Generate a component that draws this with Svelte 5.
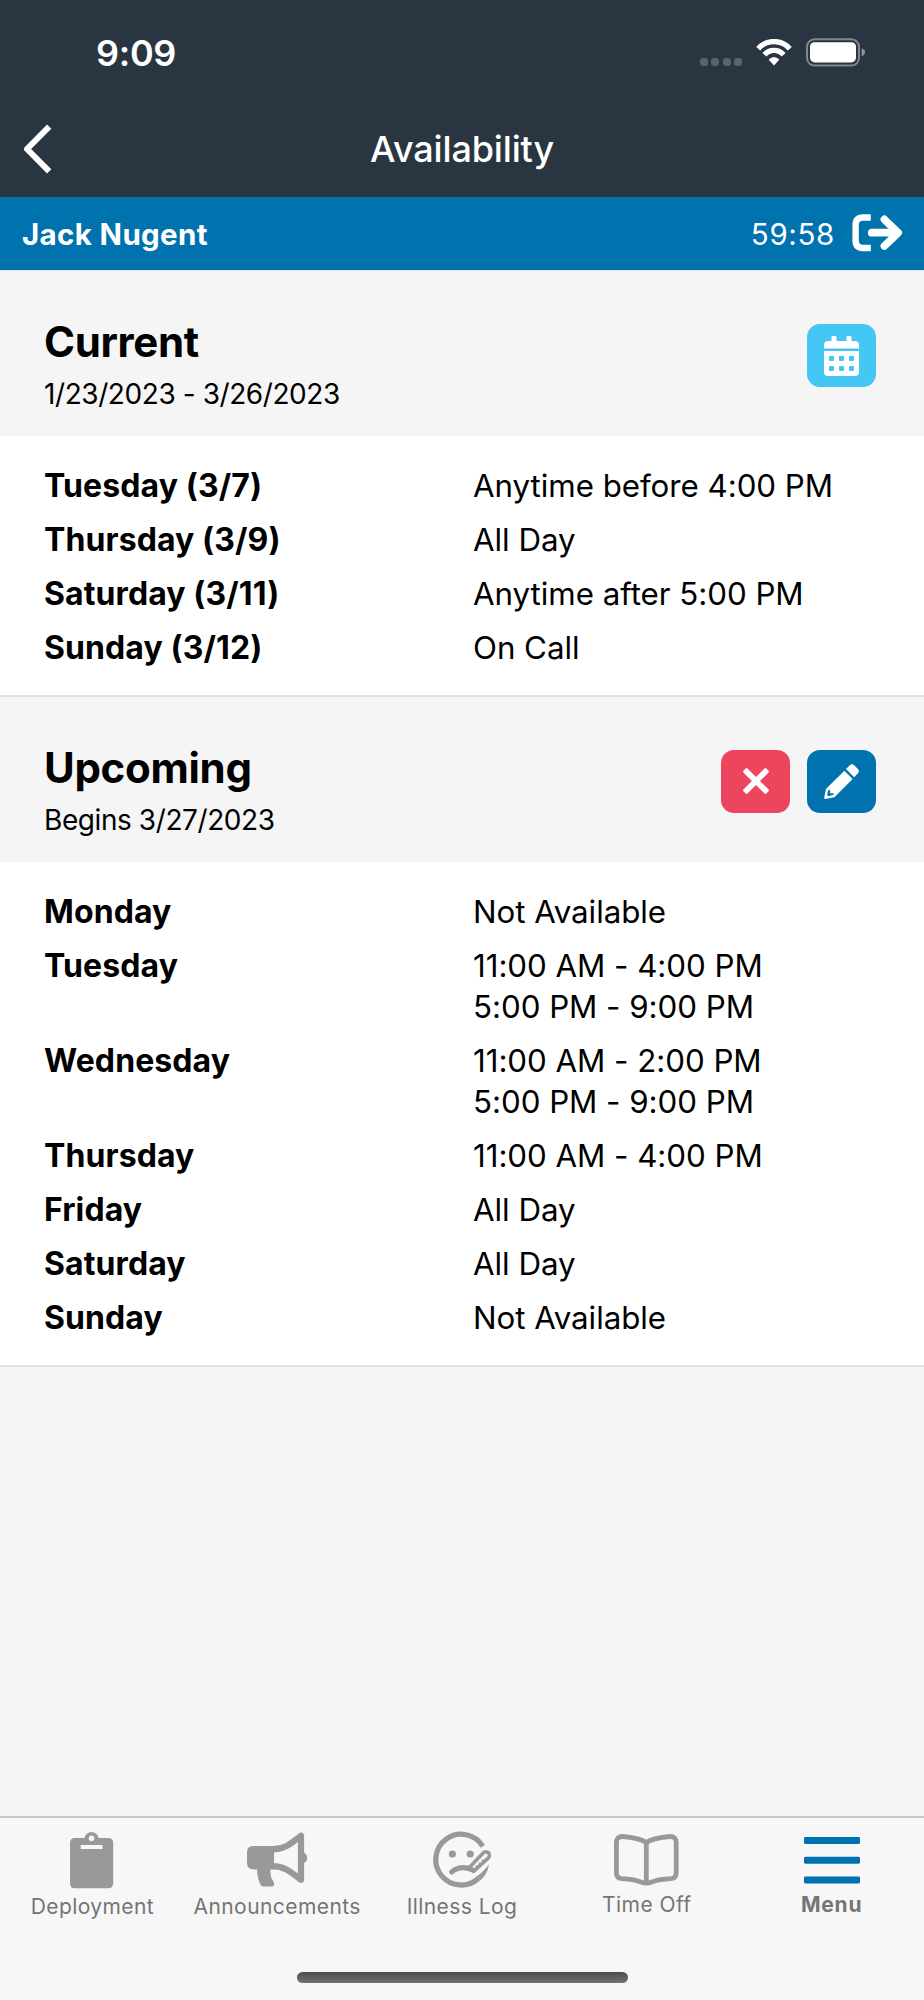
<script lang="ts">
  type Slot = { day: string; times: string[] };

  export let user: string = 'Jack Nugent';
  export let timeLeft: string = '59:58';

  const current: Slot[] = [
    { day: 'Tuesday (3/7)', times: ['Anytime before 4:00 PM'] },
    { day: 'Thursday (3/9)', times: ['All Day'] },
    { day: 'Saturday (3/11)', times: ['Anytime after 5:00 PM'] },
    { day: 'Sunday (3/12)', times: ['On Call'] },
  ];

  const upcoming: Slot[] = [
    { day: 'Monday', times: ['Not Available'] },
    { day: 'Tuesday', times: ['11:00 AM - 4:00 PM', '5:00 PM - 9:00 PM'] },
    { day: 'Wednesday', times: ['11:00 AM - 2:00 PM', '5:00 PM - 9:00 PM'] },
    { day: 'Thursday', times: ['11:00 AM - 4:00 PM'] },
    { day: 'Friday', times: ['All Day'] },
    { day: 'Saturday', times: ['All Day'] },
    { day: 'Sunday', times: ['Not Available'] },
  ];

  const sections = [
    { id: 'current', title: 'Current', range: '1/23/2023 - 3/26/2023', slots: current },
    { id: 'upcoming', title: 'Upcoming', range: 'Begins 3/27/2023', slots: upcoming },
  ];
</script>

<div class="screen">
  <header>
    <div class="status">
      <span class="clock">9:09</span>
      <div class="indicators">
        <div class="dots"><i></i><i></i><i></i><i></i></div>
        <svg class="wifi" width="36" height="27" viewBox="0 0 36 27" fill="none">
          <path d="M2.2 9.7A21 21 0 0 1 33.8 9.7" stroke="#fff" stroke-width="5.3" />
          <path d="M8.4 15.8A12.5 12.5 0 0 1 27.6 15.8" stroke="#fff" stroke-width="5.3" />
          <path d="M18 26.6L12.6 20.6Q18 15.6 23.4 20.6Z" fill="#fff" />
        </svg>
        <svg class="battery" width="59" height="29" viewBox="0 0 59 29">
          <rect x="1" y="1.2" width="52" height="26.4" rx="7.6" fill="none" stroke="#7f878d" stroke-width="2" />
          <rect x="4" y="4.2" width="46" height="20.2" rx="4.6" fill="#fff" />
          <path d="M55.7 10.3Q59 11.6 59 14.2T55.7 18.2Z" fill="#8d9499" />
        </svg>
      </div>
    </div>
    <div class="nav">
      <button class="back" aria-label="Back">
        <svg width="30" height="52" viewBox="0 0 30 52" fill="none">
          <path d="M26.2 3.6L4 26L26.2 48.4" stroke="#fff" stroke-width="6" stroke-linejoin="round" />
        </svg>
      </button>
      <h1>Availability</h1>
      <span></span>
    </div>
  </header>

  <div class="session">
    <strong>{user}</strong>
    <span class="countdown">{timeLeft}</span>
    <svg width="51" height="38" viewBox="0 0 51 38" fill="none" stroke="#fff">
      <path d="M18.8 3.5H11Q3.6 3.5 3.6 10.8V26.6Q3.6 34 11 34H18.8" stroke-width="6.4" />
      <path d="M19.8 18.7H44" stroke-width="7.8" stroke-linecap="round" />
      <path d="M32.4 5.4L46.2 18.7L32.4 32" stroke-width="7.6" stroke-linecap="round" stroke-linejoin="round" />
    </svg>
  </div>

  <main>
    {#each sections as section}
      <section>
        <div class="head">
          <div>
            <h2 class={section.id}>{section.title}</h2>
            <p>{section.range}</p>
          </div>
          <div class="actions">
            {#if section.id === 'current'}
              <button class="info" aria-label="Calendar">
                <svg width="35" height="40" viewBox="0 0 448 512" fill="#fff">
                  <path d="M0 464c0 26.5 21.5 48 48 48h352c26.5 0 48-21.5 48-48V192H0v272zm320-196c0-6.6 5.4-12 12-12h40c6.6 0 12 5.4 12 12v40c0 6.6-5.4 12-12 12h-40c-6.6 0-12-5.4-12-12v-40zm0 128c0-6.6 5.4-12 12-12h40c6.6 0 12 5.4 12 12v40c0 6.6-5.4 12-12 12h-40c-6.6 0-12-5.4-12-12v-40zM192 268c0-6.6 5.4-12 12-12h40c6.6 0 12 5.4 12 12v40c0 6.6-5.4 12-12 12h-40c-6.6 0-12-5.4-12-12v-40zm0 128c0-6.6 5.4-12 12-12h40c6.6 0 12 5.4 12 12v40c0 6.6-5.4 12-12 12h-40c-6.6 0-12-5.4-12-12v-40zM64 268c0-6.6 5.4-12 12-12h40c6.6 0 12 5.4 12 12v40c0 6.6-5.4 12-12 12H76c-6.6 0-12-5.4-12-12v-40zm0 128c0-6.6 5.4-12 12-12h40c6.6 0 12 5.4 12 12v40c0 6.6-5.4 12-12 12H76c-6.6 0-12-5.4-12-12v-40zM400 64h-48V16c0-8.8-7.2-16-16-16h-32c-8.8 0-16 7.2-16 16v48H160V16c0-8.8-7.2-16-16-16h-32c-8.8 0-16 7.2-16 16v48H48C21.5 64 0 85.5 0 112v48h448v-48c0-26.5-21.5-48-48-48z" />
                </svg>
              </button>
            {:else}
              <button class="danger" aria-label="Delete">
                <svg width="26" height="26" viewBox="-13 -13 26 26" fill="#fff">
                  <rect x="-16.2" y="-2.9" width="32.4" height="5.8" rx="1.6" transform="rotate(45)" />
                  <rect x="-16.2" y="-2.9" width="32.4" height="5.8" rx="1.6" transform="rotate(-45)" />
                </svg>
              </button>
              <button class="primary" aria-label="Edit">
                <svg width="35" height="35" viewBox="0 0 35 35" fill="#fff">
                  <path d="M22 5.1L25.6 1.5Q28 -.8 30.4 1.5L33.7 4.8Q36 7.2 33.7 9.6L30.2 13.2Z" />
                  <path
                    fill-rule="evenodd"
                    d="M20.4 6.7L28.6 15L10.4 33.2L1.3 35Q0 35 .2 33.8L1.9 25.1ZM4.2 26.3L3.2 31Q3.6 32.2 5 31.9L9.6 30.8V29.2H6.1V25.7Z"
                  />
                </svg>
              </button>
            {/if}
          </div>
        </div>
        <dl>
          {#each section.slots as slot}
            <div class="row">
              <dt>{slot.day}</dt>
              <dd>
                {#each slot.times as time}
                  <span>{time}</span>
                {/each}
              </dd>
            </div>
          {/each}
        </dl>
      </section>
    {/each}
  </main>

  <nav class="tabs">
    <div class="tab">
      <div class="icon">
        <svg width="44" height="58" viewBox="0 0 44 58" fill="#999">
          <path
            fill-rule="evenodd"
            d="M5 7H14.4A7.2 7.2 0 0 1 28.6 7H38.2Q43.2 7 43.2 12V52.3Q43.2 57.3 38.2 57.3H5Q0 57.3 0 52.3V12Q0 7 5 7ZM10.7 14V18.1H32.5V14ZM18.8 7.2A2.8 2.8 0 0 0 24.4 7.2A2.8 2.8 0 0 0 18.8 7.2Z"
          />
        </svg>
      </div>
      <span>Deployment</span>
    </div>
    <div class="tab">
      <div class="icon">
        <svg width="60" height="56" viewBox="0 0 60 56" fill="#999">
          <path d="M6.5 14H27V37.4H6.5Q0 37.4 0 31V20.4Q0 14 6.5 14Z" />
          <path d="M10 36H23.4V41Q23.6 46 26.6 49.5Q28.4 54.6 24.4 54.6H16.6Q14.4 54.6 13.4 52.6Q10 45.5 10 36Z" />
          <path
            d="M26 17.2C38 17.2 44.5 11 54 3.7V47.7C44.5 40.5 38 34.2 26 34.2"
            fill="none"
            stroke="#999"
            stroke-width="6.2"
            stroke-linejoin="round"
          />
          <path d="M56 20.4A5.6 5.6 0 0 1 56 31.2Z" />
        </svg>
      </div>
      <span>Announcements</span>
    </div>
    <div class="tab">
      <div class="icon">
        <svg width="58" height="58" viewBox="0 0 58 58" fill="#999">
          <path d="M49.8 15.3A25.4 25.4 0 1 0 45.5 47.2" fill="none" stroke="#999" stroke-width="5.3" />
          <path d="M56 33.4C54.8 40.4 51.6 46 47.2 49.3L43.7 45.3C48 42.5 52 38.5 56 33.4Z" />
          <circle cx="19.4" cy="23" r="3.6" />
          <circle cx="37.2" cy="23" r="3.6" />
          <g fill="none" stroke="#999" stroke-linecap="round" stroke-linejoin="round">
            <path d="M18.6 41Q27.5 33.6 39 38.8" stroke-width="5" />
            <path d="M36.8 36L50.4 21.8A3.5 3.5 0 0 1 55.4 26.8L40.6 40.4Z" stroke-width="3.6" />
            <path d="M44.4 36.4L43.2 35.2M47.6 33.4L46.4 32.2M50.8 30.4L49.6 29.2" stroke-width="1.6" />
          </g>
        </svg>
      </div>
      <span>Illness Log</span>
    </div>
    <div class="tab short">
      <div class="icon">
        <svg width="65" height="52" viewBox="0 0 65 52" fill="none" stroke="#999" stroke-width="4.8" stroke-linejoin="round">
          <path
            d="M32.3 8.4C26 4.6 17.5 3.2 8.6 2.5Q2.4 2.4 2.4 8.6V39Q2.4 44.2 7.6 44.6C15 45 22 45.6 27.3 48.2Q32.3 49.8 37.3 48.2C42.6 45.6 49.6 45 57 44.6Q62.2 44.2 62.2 39V8.6Q62.2 2.4 56 2.5C47.1 3.2 38.6 4.6 32.3 8.4Z"
          />
          <path d="M32.3 8.4V49" />
        </svg>
      </div>
      <span>Time Off</span>
    </div>
    <div class="tab short active">
      <div class="icon">
        <svg width="56" height="48" viewBox="0 0 56 48" fill="#0072ad">
          <rect y="1" width="56" height="7" rx="1.4" />
          <rect y="20.7" width="56" height="7" rx="1.4" />
          <rect y="40.5" width="56" height="7" rx="1.4" />
        </svg>
      </div>
      <span>Menu</span>
    </div>
    <div class="home"></div>
  </nav>
</div>

<style>
  :global(body) {
    margin: 0;
  }
  .screen {
    display: flex;
    flex-direction: column;
    width: 924px;
    height: 2000px;
    overflow: hidden;
    background: #f5f5f5;
    color: #000;
    font-family: Inter, 'Liberation Sans', sans-serif;
  }
  svg {
    display: block;
  }
  h1,
  h2,
  p,
  dl,
  dd {
    margin: 0;
  }
  button {
    display: flex;
    align-items: center;
    justify-content: center;
    padding: 0;
    border: 0;
    background: none;
  }

  header {
    height: 197px;
    background: #2a3542;
    color: #fff;
  }
  .status {
    display: flex;
    justify-content: space-between;
    height: 105px;
    box-sizing: border-box;
    padding: 31px 59px 0 96px;
  }
  .clock {
    font-size: 36px;
    font-weight: 600;
    line-height: 44px;
    letter-spacing: -0.3px;
  }
  .indicators {
    display: flex;
    align-items: flex-start;
    padding-top: 7px;
  }
  .dots {
    display: flex;
    gap: 3.8px;
    margin: 20px 14px 0 0;
  }
  .dots i {
    width: 7.7px;
    height: 8px;
    border-radius: 3px;
    background: #59636c;
  }
  .wifi {
    margin: 1px 14px 0 0;
  }
  .nav {
    display: grid;
    grid-template-columns: 1fr auto 1fr;
    align-items: center;
    height: 92px;
    box-sizing: border-box;
    padding: 0 23px 4px;
  }
  .back {
    width: 30px;
  }
  h1 {
    font-size: 36px;
    font-weight: 500;
    line-height: 44px;
    letter-spacing: -0.15px;
  }

  .session {
    display: flex;
    align-items: center;
    height: 73px;
    padding: 0 21px 0 22px;
    border-bottom: 1px solid #dbeaf2;
    background: #0072ad;
    color: #fff;
    font-size: 29.5px;
  }
  .session strong {
    flex: 1;
    font-weight: 700;
    letter-spacing: 0.35px;
  }
  .countdown {
    margin-right: 17px;
    letter-spacing: 0.65px;
  }
  .session svg {
    margin-bottom: 2px;
  }

  main {
    flex: 1;
  }
  .head {
    display: flex;
    justify-content: space-between;
    height: 165px;
    box-sizing: border-box;
    padding: 46px 48px 0 44px;
  }
  h2 {
    font-size: 42px;
    font-weight: 700;
    line-height: 50px;
    letter-spacing: -0.35px;
  }
  h2.upcoming {
    letter-spacing: -0.3px;
  }
  .head p {
    margin-top: 8px;
    font-size: 28px;
    line-height: 38px;
    letter-spacing: -0.42px;
  }
  .actions {
    display: flex;
    gap: 17px;
    padding-top: 7px;
  }
  .actions button {
    width: 69px;
    height: 63px;
    border-radius: 13px;
  }
  .info {
    background: #45c7f6;
  }
  .danger {
    background: #ed455d;
  }
  .primary {
    background: #0072ad;
  }

  dl {
    padding: 23.2px 44px 19.4px;
    border-bottom: 2px solid #e1e1e1;
    background: #fff;
    font-size: 31.3px;
    line-height: 40.9px;
  }
  .row {
    display: grid;
    grid-template-columns: 429px 1fr;
    padding: 6.6px 0;
  }
  dt {
    font-size: 32px;
    font-weight: 700;
    letter-spacing: 0.1px;
  }
  dd {
    letter-spacing: -0.04px;
  }
  dd span {
    display: block;
  }

  .tabs {
    display: grid;
    grid-template-columns: repeat(5, 1fr);
    grid-template-rows: 1fr auto;
    height: 184px;
    padding-top: 13px;
    box-sizing: border-box;
    border-top: 2px solid #c8c8c8;
    background: #f7f7f7;
  }
  .tab {
    display: flex;
    flex-direction: column;
    align-items: center;
    color: #757575;
    font-size: 21px;
    line-height: 26px;
    letter-spacing: 0.43px;
  }
  .icon {
    display: flex;
    align-items: center;
    height: 57px;
    margin-bottom: 6px;
  }
  .short {
    line-height: 21px;
  }
  .active {
    font-weight: 700;
    letter-spacing: 0.8px;
  }
  .home {
    grid-column: 1 / -1;
    justify-self: center;
    width: 331px;
    height: 11px;
    margin-bottom: 17px;
    border-radius: 6px;
    background: linear-gradient(#4c4c4c, #727272);
  }
</style>
